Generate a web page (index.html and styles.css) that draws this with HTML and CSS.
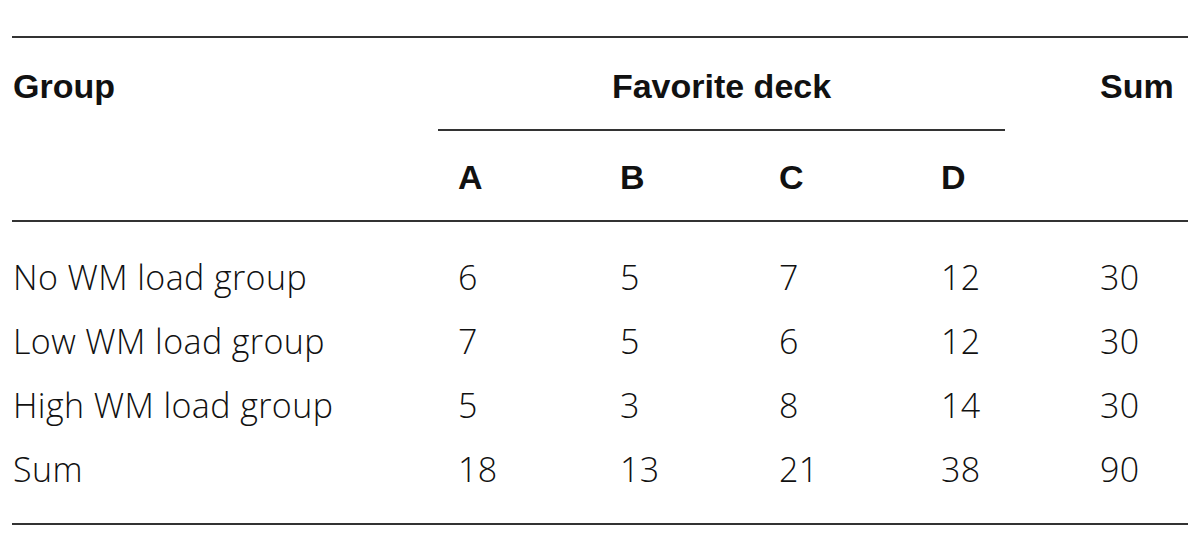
FILE: index.html
```html
<!DOCTYPE html>
<html>
<head>
<meta charset="utf-8">
<link rel="stylesheet" href="styles.css">
</head>
<body>
<table class="tbl">
  <colgroup>
    <col class="c-group">
    <col class="c-a">
    <col class="c-b">
    <col class="c-c">
    <col class="c-d">
    <col class="c-sum">
  </colgroup>
  <thead>
    <tr class="h1">
      <th>Group</th>
      <th colspan="4" class="fav"><div class="fav-inner">Favorite deck</div></th>
      <th>Sum</th>
    </tr>
    <tr class="h2">
      <th></th>
      <th>A</th>
      <th>B</th>
      <th>C</th>
      <th>D</th>
      <th></th>
    </tr>
  </thead>
  <tbody>
    <tr class="first"><td>No WM load group</td><td>6</td><td>5</td><td>7</td><td>12</td><td>30</td></tr>
    <tr><td>Low WM load group</td><td>7</td><td>5</td><td>6</td><td>12</td><td>30</td></tr>
    <tr><td>High WM load group</td><td>5</td><td>3</td><td>8</td><td>14</td><td>30</td></tr>
    <tr class="last"><td>Sum</td><td>18</td><td>13</td><td>21</td><td>38</td><td>90</td></tr>
  </tbody>
</table>
</body>
</html>
```
FILE: styles.css
```css
html, body {
  margin: 0;
  padding: 0;
  background: #fff;
}
body {
  padding: 36px 12px 0 12px;
}
.tbl {
  width: 1176px;
  border-collapse: collapse;
  table-layout: fixed;
  color: #111;
}
.c-group { width: 446px; }
.c-a { width: 162px; }
.c-b { width: 159px; }
.c-c { width: 162px; }
.c-d { width: 159px; }
.c-sum { width: 88px; }

.tbl th {
  font-family: "Liberation Sans", Arial, sans-serif;
  font-weight: bold;
  font-size: 34px;
  line-height: 40px;
  text-align: left;
  padding: 28px 0 23px 0;
  vertical-align: top;
}
.tbl thead .h1 th {
  border-top: 2px solid #333;
}
.tbl thead .h1 th:first-child {
  padding-left: 1px;
}
.tbl thead .h1 th.fav {
  padding-bottom: 0;
}
.fav-inner {
  margin: 0 95px 0 -20px;
  text-align: center;
  padding-bottom: 23px;
  border-bottom: 2px solid #333;
  margin-bottom: -2px;
}
.tbl thead .h2 th {
  border-bottom: 2px solid #333;
}
.tbl td {
  font-family: "Open Sans", sans-serif;
  font-weight: 300;
  font-size: 34px;
  letter-spacing: 0.4px;
  line-height: 40px;
  padding: 12px 0;
  text-align: left;
  white-space: nowrap;
}
.tbl td:first-child {
  padding-left: 1px;
}
.tbl tr.first td {
  padding-top: 35px;
}
.tbl tr.last td {
  padding-bottom: 34px;
  border-bottom: 2px solid #333;
}
```
